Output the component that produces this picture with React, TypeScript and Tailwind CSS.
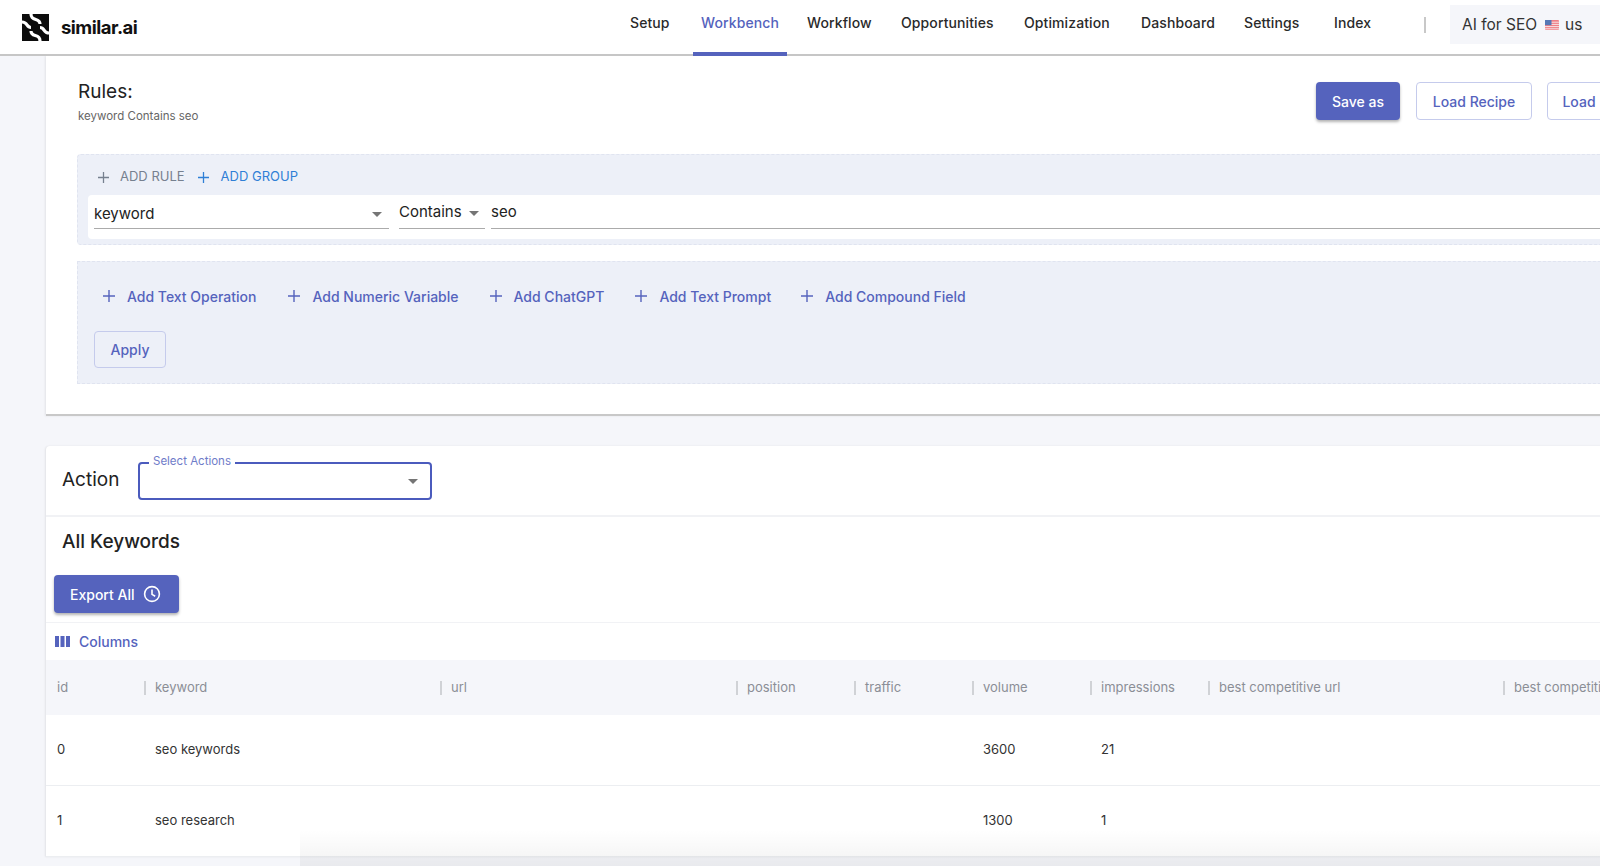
import React from "react";

const font = { fontFamily: '"Inter", "Liberation Sans", sans-serif' };

function Logo() {
  return (
    <svg width="27" height="27" viewBox="0 0 27 27" className="shrink-0">
      <rect width="27" height="27" fill="#0c0c0c" />
      <path d="M9 0C9 8 18 3 18 10" stroke="#fff" strokeWidth="3.2" fill="none" />
      <path d="M18 27C18 19 9 24 9 17" stroke="#fff" strokeWidth="3.2" fill="none" />
      <path d="M0 8C6 8 4 13.5 9 13.5" stroke="#fff" strokeWidth="3.2" fill="none" />
      <path d="M27 19C21 19 23 13.5 18 13.5" stroke="#fff" strokeWidth="3.2" fill="none" />
    </svg>
  );
}

function Caret({ className = "" }: { className?: string }) {
  return (
    <svg width="10" height="5" viewBox="0 0 10 5" className={className}>
      <path d="M0 0h10L5 5z" fill="#757575" />
    </svg>
  );
}

function Plus({ color, size = 12 }: { color: string; size?: number }) {
  return (
    <svg width={size} height={size} viewBox="0 0 12 12" className="shrink-0">
      <path d="M6 0v12M0 6h12" stroke={color} strokeWidth="1.4" />
    </svg>
  );
}

function Flag() {
  return (
    <svg width="14" height="10" viewBox="0 0 14 10" className="shrink-0">
      <rect width="14" height="10" rx="1" fill="#ef7f86" />
      <path d="M0 2.2h14M0 4.4h14M0 6.6h14M0 8.8h14" stroke="#f6e3e5" strokeWidth="1" />
      <rect width="6.5" height="5.2" fill="#5577b5" />
    </svg>
  );
}

const navItems = [
  { label: "Setup", cls: "ml-[630px] w-[41px]" },
  { label: "Workbench", cls: "ml-[22px] w-[94px] px-2 text-[#5563bd]" },
  { label: "Workflow", cls: "ml-[20px] w-[66px]" },
  { label: "Opportunities", cls: "ml-[28px] w-[96px]" },
  { label: "Optimization", cls: "ml-[27px] w-[89px]" },
  { label: "Dashboard", cls: "ml-[28px] w-[74px]" },
  { label: "Settings", cls: "ml-[29px] w-[58px]" },
  { label: "Index", cls: "ml-[32px] w-[38px]" },
];

const addItems = [
  { label: "Add Text Operation", cls: "ml-[25px]" },
  { label: "Add Numeric Variable", cls: "ml-[32px]" },
  { label: "Add ChatGPT", cls: "ml-[31px]" },
  { label: "Add Text Prompt", cls: "ml-[31px]" },
  { label: "Add Compound Field", cls: "ml-[30px]" },
];

const columns = [
  { label: "id", cls: "w-[98px] pl-[11px]" },
  { label: "keyword", cls: "w-[296px]" },
  { label: "url", cls: "w-[296px]" },
  { label: "position", cls: "w-[118px]" },
  { label: "traffic", cls: "w-[118px]" },
  { label: "volume", cls: "w-[118px]" },
  { label: "impressions", cls: "w-[118px]" },
  { label: "best competitive url", cls: "w-[295px]" },
  { label: "best competitive position", cls: "w-[200px]" },
];

const rows = [
  ["0", "seo keywords", "", "", "", "3600", "21", "", ""],
  ["1", "seo research", "", "", "", "1300", "1", "", ""],
];

export default function App() {
  return (
    <div style={font} className="relative h-[866px] w-[1600px] overflow-hidden bg-[#f5f6fa] text-[#1f1f1f]">
      <header className="relative z-10 flex h-[56px] w-full items-start border-b-2 border-[#c6c6c6] bg-white">
        <div className="ml-[22px] mt-[14px] flex items-center">
          <Logo />
          <span className="ml-[12px] w-[80px] text-[18.5px] font-bold leading-[27px] tracking-[-0.5px] text-[#111]">similar.ai</span>
        </div>
        <nav className="-ml-[141px] flex h-[56px] shrink-0">
          {navItems.map((n) => (
            <div
              key={n.label}
              className={`${n.cls} h-[56px] whitespace-nowrap pt-[13px] text-[14px] font-medium leading-[20px] tracking-[0.1px] ${
                n.label === "Workbench" ? "border-b-4 border-[#5563bd]" : "text-[#2a2a2a]"
              }`}
            >
              {n.label}
            </div>
          ))}
        </nav>
        <div className="ml-[52px] mt-[17px] h-[16px] w-[2px] shrink-0 bg-[#c8c8c8]" />
        <div className="ml-[24px] mt-[5px] flex h-[39px] w-[150px] shrink-0 items-center bg-[#f5f6fa] pl-[12px] text-[15.5px] text-[#333]">
          <span>AI for SEO</span>
          <span className="ml-[8px]"><Flag /></span>
          <span className="ml-[6px]">us</span>
        </div>
      </header>

      <main className="ml-[46px] w-[1700px]">
        <section className="h-[360px] border-b-2 border-[#c8c8c8] bg-white pl-[32px] pt-[26px] [box-shadow:-1px_0_2px_rgba(0,0,0,0.08)]">
          <div className="flex h-[72px] items-start">
            <div className="w-[1238px]">
              <div className="mt-[-3px] text-[19px] leading-[26px] text-[#222]">Rules:</div>
              <div className="mt-[3px] text-[11.5px] leading-[16px] text-[#666]">keyword Contains seo</div>
            </div>
            <button className="h-[38px] w-[84px] rounded-[4px] bg-[#5563bd] text-[14px] font-medium text-white shadow-[0_2px_3px_rgba(0,0,0,0.3)]">Save as</button>
            <button className="ml-[16px] h-[38px] w-[116px] rounded-[4px] border border-[#c5cbec] bg-white text-[14px] font-medium text-[#5563bd]">Load Recipe</button>
            <button className="ml-[15px] h-[38px] w-[116px] rounded-[4px] border border-[#c5cbec] bg-white pr-[52px] text-[14px] font-medium text-[#5563bd]">Load</button>
          </div>

          <div className="-ml-[1px] h-[91px] rounded-[4px] border border-dashed border-[#e0e4f0] bg-[#edf0f8] pl-[10px] pt-[4px]">
            <div className="flex h-[36px] items-center text-[13px]">
              <span className="ml-[10px]"><Plus color="#76808f" size={11} /></span>
              <span className="ml-[11px] text-[#76808f]">ADD RULE</span>
              <span className="ml-[13px]"><Plus color="#2f7fd6" size={11} /></span>
              <span className="ml-[12px] text-[#2f7fd6]">ADD GROUP</span>
            </div>
            <div className="flex h-[44px] items-start rounded-[4px] bg-white pl-[6px] pt-[6px] text-[15px] text-[#222]">
              <div className="flex h-[28px] w-[295px] items-center justify-between border-b border-[#ababab] pr-[7px]">
                <span>keyword</span>
                <Caret />
              </div>
              <div className="ml-[10px] flex h-[28px] w-[86px] items-start justify-between border-b border-[#ababab] pr-[6px]">
                <span className="leading-[22px]">Contains</span>
                <Caret className="mt-[10px]" />
              </div>
              <div className="ml-[6px] h-[28px] w-[1200px] border-b border-[#ababab] leading-[22px]">seo</div>
            </div>
          </div>

          <div className="-ml-[1px] mt-[16px] h-[123px] border border-dashed border-[#e0e4f0] bg-[#edf0f8]">
            <div className="flex h-[69px] items-center pb-[1px] text-[14px] font-medium text-[#5563bd]">
              {addItems.map((a) => (
                <div key={a.label} className={`${a.cls} flex items-center`}>
                  <Plus color="#5563bd" />
                  <span className="ml-[12px] whitespace-nowrap">{a.label}</span>
                </div>
              ))}
            </div>
            <button className="ml-[16px] h-[37px] w-[72px] rounded-[4px] border border-[#c5cbec] text-[14px] font-medium text-[#5563bd]">Apply</button>
          </div>
        </section>

        <section className="mt-[30px] rounded-t-[4px] bg-white [box-shadow:-1px_0_2px_rgba(0,0,0,0.08)]">
          <div className="flex h-[71px] items-center border-b-2 border-[#f1f2f5] pl-[16px]">
            <span className="w-[76px] text-[19px] text-[#222]">Action</span>
            <div className="relative h-[38px] w-[294px] rounded-[4px] border-2 border-[#4b5bbd]">
              <span className="absolute -top-[10px] left-[9px] bg-white px-[4px] text-[11.5px] leading-[14px] text-[#6f7cc9]">Select Actions</span>
              <Caret className="absolute right-[12px] top-[15px]" />
            </div>
          </div>
          <div className="flex h-[50px] items-center pl-[16px] text-[19px] font-medium text-[#222]">All Keywords</div>
          <div className="h-[56px] border-b border-[#f1f2f5] pl-[8px] pt-[8px]">
            <button className="flex h-[38px] w-[125px] items-center rounded-[4px] bg-[#5563bd] pl-[16px] text-[14px] font-medium text-white shadow-[0_2px_3px_rgba(0,0,0,0.3)]">
              Export All
              <svg width="18" height="18" viewBox="0 0 18 18" className="ml-[9px]" fill="none" stroke="#fff" strokeWidth="1.6">
                <circle cx="9" cy="9" r="7.4" />
                <path d="M9 4.6V9.4l3.2 1.9" />
              </svg>
            </button>
          </div>
          <div className="flex h-[37px] items-center pl-[9px] text-[14px] font-medium text-[#5563bd]">
            <svg width="15" height="11" viewBox="0 0 15 11" fill="#5563bd">
              <rect width="4" height="11" />
              <rect x="5.5" width="4" height="11" />
              <rect x="11" width="4" height="11" />
            </svg>
            <span className="ml-[9px]">Columns</span>
          </div>
          <div className="flex h-[55px] items-center bg-[#f5f6fa] text-[13px] text-[#8b8e96]">
            {columns.map((c, i) => (
              <div key={c.label} className={`${c.cls} flex h-[14px] shrink-0 items-center whitespace-nowrap ${i === 0 ? "" : "border-l-2 border-[#d0d2d6] pl-[9px]"}`}>
                {c.label}
              </div>
            ))}
          </div>
          {rows.map((r) => (
            <div key={r[0]} className="flex h-[71px] items-center border-b border-[#eceef1] text-[13px] text-[#333]">
              {r.map((v, i) => (
                <div key={i} className={`${columns[i].cls} shrink-0 whitespace-nowrap ${i === 0 ? "" : "pl-[11px]"}`}>
                  {v}
                </div>
              ))}
            </div>
          ))}
        </section>
      </main>

      <div className="pointer-events-none absolute bottom-0 left-[300px] right-0 h-[36px] bg-gradient-to-t from-black/[0.05] to-transparent" />
    </div>
  );
}
